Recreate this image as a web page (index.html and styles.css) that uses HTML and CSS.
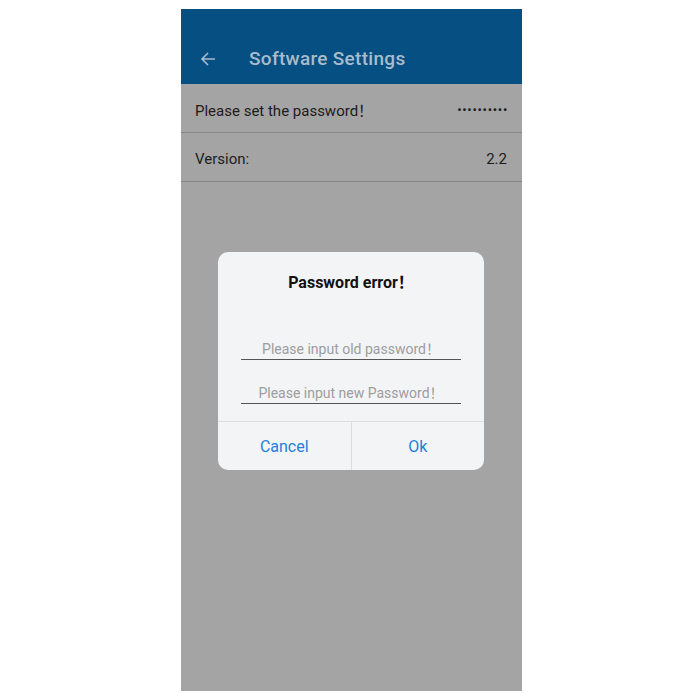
FILE: index.html
```html
<!DOCTYPE html>
<html lang="en">
<head>
    <meta charset="UTF-8">
    <meta name="viewport" content="width=device-width, initial-scale=1.0">
    <title>Software Settings</title>
    <link rel="stylesheet" href="styles.css">
</head>
<body>
    <div class="phone">
        <div class="toolbar">
            <svg class="back" width="16" height="16" viewBox="0 0 16 16">
                <path d="M15 8H2M8 2L2 8l6 6" fill="none" stroke="#a9bccb" stroke-width="1.6"/>
            </svg>
            <span class="title">Software Settings</span>
        </div>

        <div class="row">
            <span>Please set the password！</span>
            <span class="dots">••••••••••</span>
        </div>
        <div class="row">
            <span>Version:</span>
            <span>2.2</span>
        </div>

        <!-- dialog over dimmed screen -->
        <div class="dialog">
            <h3>Password error！</h3>
            <input type="password" class="field first" placeholder="Please input old password！">
            <input type="password" class="field" placeholder="Please input new Password！">
            <div class="buttons">
                <button>Cancel</button>
                <button>Ok</button>
            </div>
        </div>
    </div>
</body>
</html>
```

FILE: styles.css
```css
body {
    margin: 0;
    background: #fff;
    font-family: Roboto, "Noto Sans CJK SC", sans-serif;
}
.phone {
    position: relative;
    width: 341px;
    height: 682px;
    margin: 9px 0 0 181px;
    background: #a4a4a4;
}
.toolbar {
    height: 75px;
    box-sizing: border-box;
    padding: 24px 0 0 19px;
    display: flex;
    align-items: center;
    background: #064f82;
}
.toolbar .back {
    margin-right: 33px;
}
.title {
    color: #a9bccb;
    font-size: 19px;
    font-weight: 500;
    letter-spacing: 0.3px;
}
.row {
    height: 45px;
    padding: 3px 15px 0 14px;
    display: flex;
    align-items: center;
    justify-content: space-between;
    border-bottom: 1px solid #888;
    font-size: 15px;
    color: #1c1c1c;
}
.dots {
    font-size: 13px;
    letter-spacing: 0.7px;
    margin-right: -1px;
}
.dialog {
    position: absolute;
    left: 37px;
    top: 243px;
    width: 266px;
    background: #f3f4f6;
    border-radius: 10px;
    display: flex;
    flex-direction: column;
    align-items: center;
}
.dialog h3 {
    margin: 20px 0 0;
    font-size: 16px;
    line-height: 22px;
    font-weight: 700;
    color: #111;
}
.field {
    width: 220px;
    height: 30px;
    box-sizing: border-box;
    margin-top: 14px;
    padding: 8px 0 0;
    border: none;
    border-bottom: 1px solid #555;
    background: transparent;
    text-align: center;
    font-family: inherit;
    font-size: 14px;
}
.field.first {
    margin-top: 36px;
}
.field::placeholder {
    color: #9d9d9d;
}
.buttons {
    width: 100%;
    margin-top: 17px;
    display: flex;
    border-top: 1px solid #dedede;
}
.buttons button {
    flex: 1;
    height: 48px;
    border: none;
    background: transparent;
    color: #1e80d8;
    font-family: inherit;
    font-size: 16px;
}
.buttons button + button {
    border-left: 1px solid #dedede;
}
```
